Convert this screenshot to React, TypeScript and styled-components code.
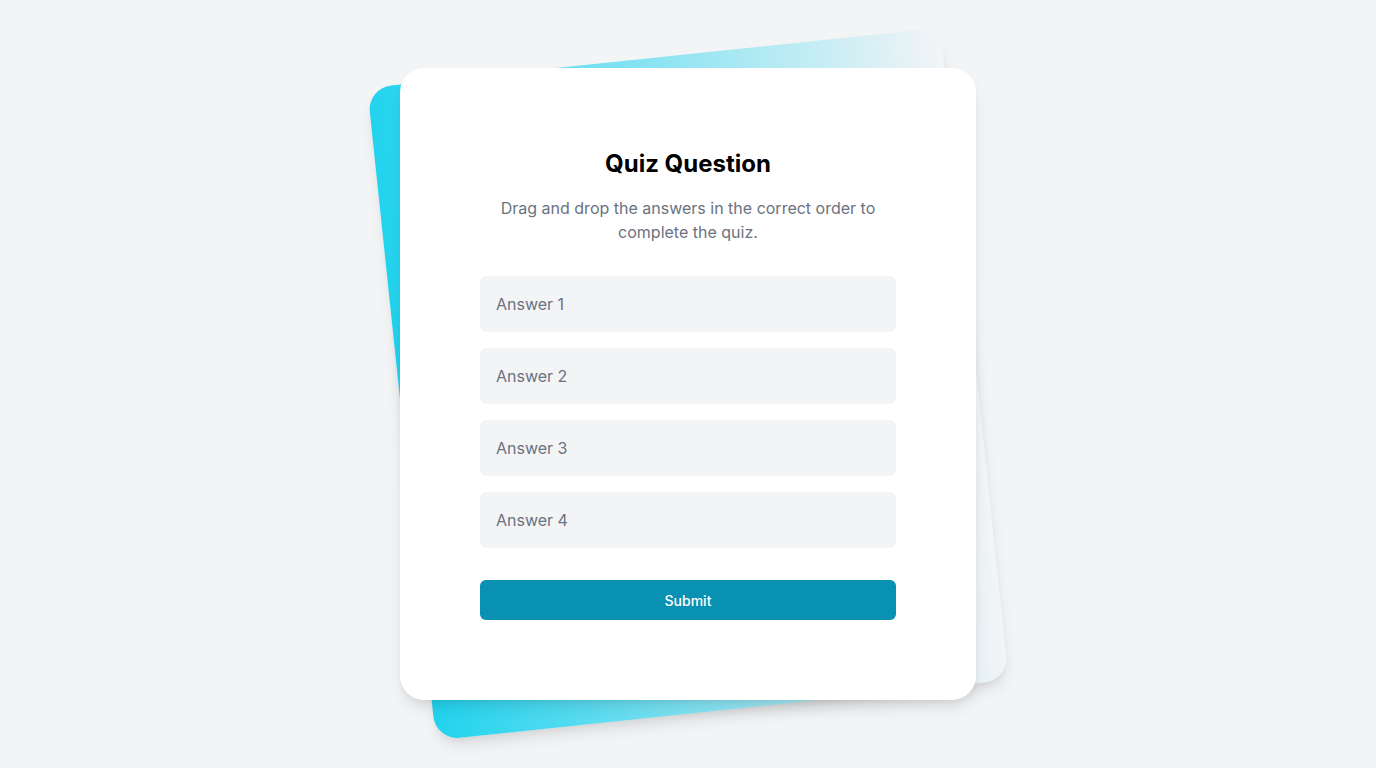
import React from "react";
import styled, { createGlobalStyle } from "styled-components";

const Global = createGlobalStyle`
  * { box-sizing: border-box; }
  html, body { margin: 0; padding: 0; }
  body {
    background: #f3f4f6;
    font-family: Inter, "Noto Sans", sans-serif;
    -webkit-font-smoothing: antialiased;
  }
`;

const Page = styled.main`
  min-height: 768px;
  display: flex;
  align-items: center;
  justify-content: center;
`;

const Stack = styled.div`
  position: relative;
  width: 576px;
  padding: 12px 0;
`;

const Backdrop = styled.div`
  position: absolute;
  inset: 0;
  border-radius: 24px;
  background: linear-gradient(to right, #22d3ee, rgba(34, 211, 238, 0));
  box-shadow: 0 10px 15px -3px rgba(0, 0, 0, 0.1), 0 4px 6px -2px rgba(0, 0, 0, 0.05);
  transform: rotate(-6deg);
`;

const Card = styled.section`
  position: relative;
  background: #ffffff;
  border-radius: 24px;
  padding: 80px;
  box-shadow: 0 10px 15px -3px rgba(0, 0, 0, 0.1), 0 4px 6px -2px rgba(0, 0, 0, 0.05);
  display: flex;
  flex-direction: column;
`;

const Title = styled.h1`
  margin: 0;
  font-size: 24px;
  line-height: 32px;
  font-weight: 700;
  color: #000;
  text-align: center;
`;

const Subtitle = styled.p`
  margin: 16px 0 0;
  font-size: 16px;
  line-height: 24px;
  color: #6b7280;
  text-align: center;
`;

const AnswerList = styled.ul`
  list-style: none;
  margin: 32px 0 0;
  padding: 0;
  display: flex;
  flex-direction: column;
  gap: 16px;
`;

const Answer = styled.li`
  background: #f3f4f6;
  border-radius: 6px;
  padding: 16px;
  font-size: 16px;
  line-height: 24px;
  color: #6b7280;
  cursor: grab;
`;

const SubmitButton = styled.button`
  margin-top: 32px;
  height: 40px;
  border: none;
  border-radius: 6px;
  background: #0891b2;
  color: #ffffff;
  font-family: inherit;
  font-size: 14px;
  font-weight: 500;
  cursor: pointer;
`;

const answers = ["Answer 1", "Answer 2", "Answer 3", "Answer 4"];

export default function App() {
  return (
    <>
      <Global />
      <Page>
        <Stack>
          <Backdrop />
          <Card>
            <Title>Quiz Question</Title>
            <Subtitle>
              Drag and drop the answers in the correct order to complete the quiz.
            </Subtitle>
            <AnswerList>
              {answers.map((a) => (
                <Answer key={a} draggable>
                  {a}
                </Answer>
              ))}
            </AnswerList>
            <SubmitButton type="button">Submit</SubmitButton>
          </Card>
        </Stack>
      </Page>
    </>
  );
}
